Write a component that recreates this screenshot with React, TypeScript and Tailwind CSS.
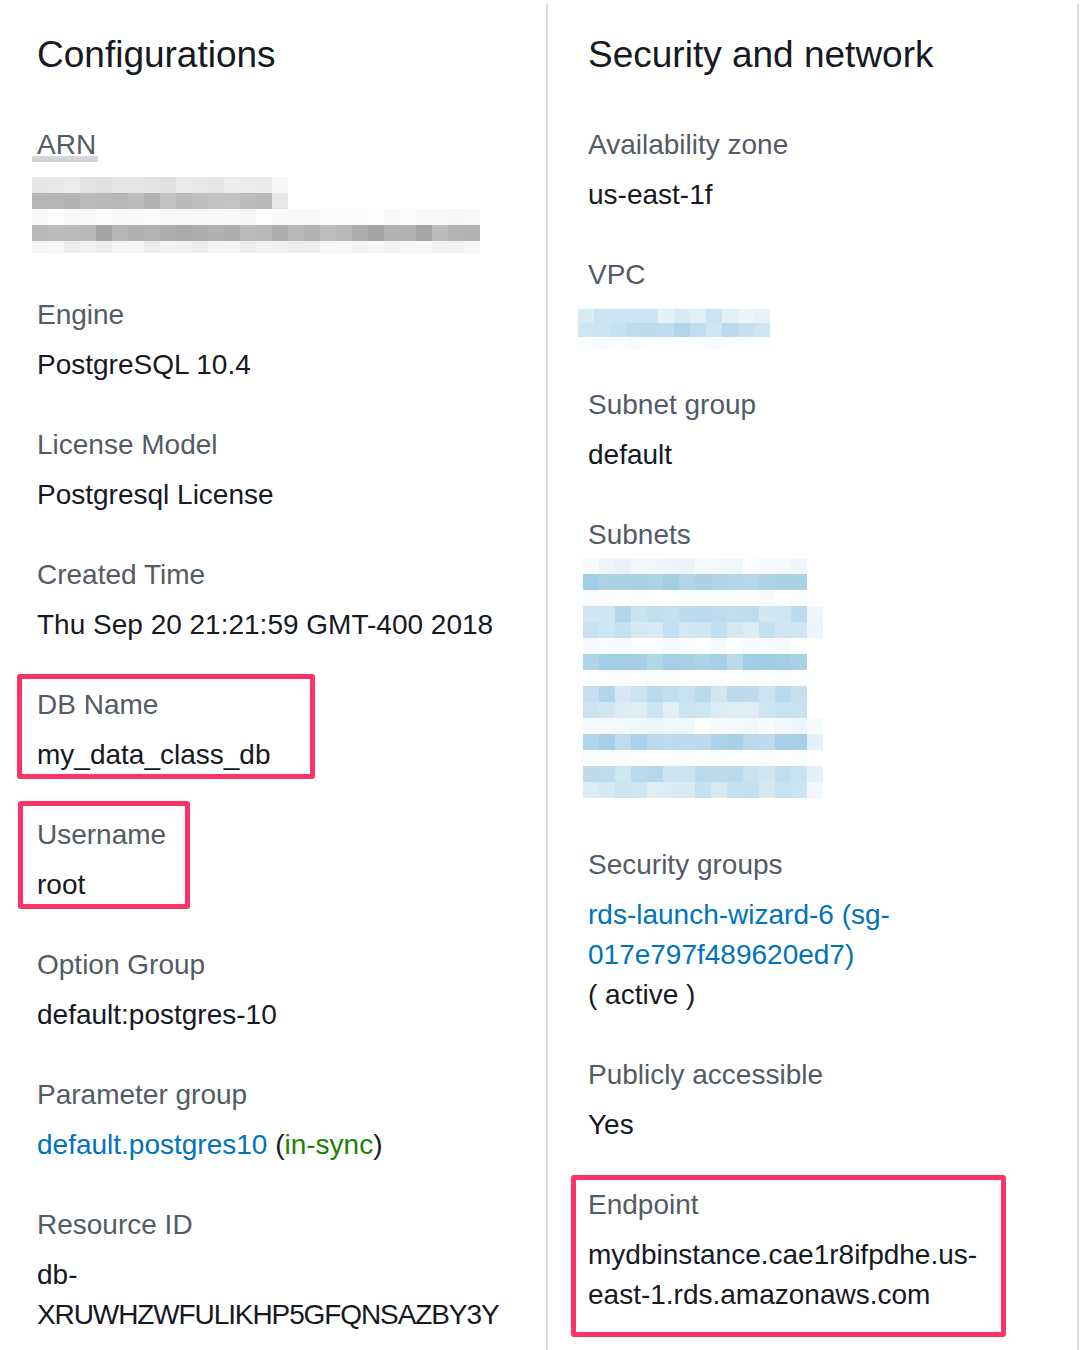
import React from "react";

const font = { fontFamily: '"Liberation Sans", Arial, sans-serif' };

function rnd(seed: number) {
  const x = Math.sin(seed * 12.9898 + 78.233) * 43758.5453;
  return x - Math.floor(x);
}

type Row = { cols: number; t: number; spread: number; h: number; fade?: boolean };

// pixelated (redacted) blocks, drawn as svg rects
function Pixels({
  rows,
  cell,
  tone,
  seed,
  width,
  height,
}: {
  rows: Row[];
  cell: number;
  tone: "gray" | "blue";
  seed: number;
  width: number;
  height: number;
}) {
  let y = 0;
  const rects: React.ReactElement[] = [];
  rows.forEach((row, ri) => {
    for (let c = 0; c < row.cols; c++) {
      let t = row.t + (rnd(seed + ri * 97 + c * 13) - 0.5) * row.spread;
      if (row.fade && c === row.cols - 1) t = t * 0.35;
      t = Math.max(0, Math.min(1, t));
      let fill: string;
      if (tone === "gray") {
        const v = Math.round(255 - t * 120);
        fill = `rgb(${v},${Math.min(255, v + 1)},${Math.min(255, v + 3)})`;
      } else {
        const r = Math.round(255 - t * (255 - 135));
        const g = Math.round(255 - t * (255 - 190));
        const b = Math.round(255 - t * (255 - 222));
        fill = `rgb(${r},${g},${b})`;
      }
      rects.push(<rect key={`${ri}-${c}`} x={c * cell} y={y} width={cell} height={row.h} fill={fill} />);
    }
    y += row.h;
  });
  return (
    <svg width={width} height={height} className="block" shapeRendering="crispEdges">
      {rects}
    </svg>
  );
}

const arnRows: Row[] = [
  { cols: 16, t: 0.22, spread: 0.14, h: 16, fade: true },
  { cols: 16, t: 0.6, spread: 0.18, h: 16, fade: true },
  { cols: 28, t: 0.05, spread: 0.06, h: 16 },
  { cols: 28, t: 0.66, spread: 0.22, h: 16 },
  { cols: 28, t: 0.12, spread: 0.1, h: 12 },
];

const vpcRows: Row[] = [
  { cols: 12, t: 0.3, spread: 0.3, h: 14 },
  { cols: 12, t: 0.55, spread: 0.35, h: 14 },
  { cols: 12, t: 0.03, spread: 0.04, h: 13 },
];

const subnetRows: Row[] = [
  { cols: 14, t: 0.12, spread: 0.2, h: 16 },
  { cols: 14, t: 0.72, spread: 0.2, h: 16 },
  { cols: 14, t: 0.03, spread: 0.05, h: 16 },
  { cols: 15, t: 0.5, spread: 0.3, h: 16, fade: true },
  { cols: 15, t: 0.38, spread: 0.25, h: 16, fade: true },
  { cols: 14, t: 0.05, spread: 0.08, h: 16 },
  { cols: 14, t: 0.68, spread: 0.22, h: 16 },
  { cols: 14, t: 0.03, spread: 0.05, h: 16 },
  { cols: 14, t: 0.5, spread: 0.3, h: 16 },
  { cols: 14, t: 0.35, spread: 0.25, h: 16 },
  { cols: 15, t: 0.08, spread: 0.12, h: 16 },
  { cols: 15, t: 0.65, spread: 0.25, h: 16, fade: true },
  { cols: 14, t: 0.03, spread: 0.05, h: 16 },
  { cols: 15, t: 0.5, spread: 0.25, h: 16, fade: true },
  { cols: 15, t: 0.38, spread: 0.22, h: 16, fade: true },
];

function Field({
  label,
  children,
  box,
}: {
  label: React.ReactNode;
  children: React.ReactNode;
  box?: string;
}) {
  return (
    <div className="relative mb-[40px]">
      {box && <span className={`pointer-events-none absolute rounded-[3px] border-[5px] border-[#fd3368] ${box}`} />}
      <div className="text-[28px] leading-[40px] text-[#545b64]">{label}</div>
      <div className="mt-[10px] text-[28px] leading-[40px] text-[#16191f]">{children}</div>
    </div>
  );
}

function Heading({ children }: { children: React.ReactNode }) {
  return <h2 className="mb-[48px] text-[37px] leading-[44px] font-normal text-[#16191f]">{children}</h2>;
}

export default function App() {
  return (
    <div className="flex h-[1350px] w-[1086px] overflow-hidden bg-white pt-[4px]" style={font}>
      <section className="w-[546px] shrink-0 pl-[37px] pr-[29px] pt-[29px]">
        <Heading>Configurations</Heading>

        <div className="mb-[40px]">
          <div className="text-[28px] leading-[40px] text-[#545b64]">
            <span className="relative inline-block">
              ARN
              <span className="absolute bottom-[3px] left-[-5px] h-[6px] w-[66px] bg-[#d3d5d8]" />
            </span>
          </div>
          <div className="ml-[-5px] mt-[12px] h-[78px]">
            <Pixels rows={arnRows} cell={16} tone="gray" seed={3} width={460} height={76} />
          </div>
        </div>

        <Field label="Engine">PostgreSQL 10.4</Field>
        <Field label="License Model">Postgresql License</Field>
        <Field label="Created Time">Thu Sep 20 21:21:59 GMT-400 2018</Field>
        <Field label="DB Name" box="left-[-20px] top-[-11px] h-[105px] w-[298px]">
          my_data_class_db
        </Field>
        <Field label="Username" box="left-[-19px] top-[-14px] h-[108px] w-[172px]">
          root
        </Field>
        <Field label="Option Group">default:postgres-10</Field>
        <Field label="Parameter group">
          <span className="text-[#0073bb]">default.postgres10</span> (
          <span className="text-[#1d8102]">in-sync</span>)
        </Field>
        <Field label="Resource ID">
          db-<span className="tracking-[-1.1px]">XRUWHZWFULIKHP5GFQNSAZBY3Y</span>
        </Field>
      </section>

      <section className="w-[533px] shrink-0 border-x-2 border-[#d5dbdb] pl-[40px] pr-[70px] pt-[29px]">
        <Heading>Security and network</Heading>

        <Field label="Availability zone">us-east-1f</Field>

        <div className="mb-[40px]">
          <div className="text-[28px] leading-[40px] text-[#545b64]">VPC</div>
          <div className="ml-[-10px] mt-[14px] h-[36px]">
            <Pixels rows={vpcRows} cell={16} tone="blue" seed={11} width={200} height={41} />
          </div>
        </div>

        <Field label="Subnet group">default</Field>

        <div className="mb-[40px]">
          <div className="text-[28px] leading-[40px] text-[#545b64]">Subnets</div>
          <div className="ml-[-5px] mt-[3px] h-[247px]">
            <Pixels rows={subnetRows} cell={16} tone="blue" seed={29} width={240} height={240} />
          </div>
        </div>

        <Field label="Security groups">
          <span className="text-[#0073bb]">rds-launch-wizard-6 (sg-017e797f489620ed7)</span>
          <div>( active )</div>
        </Field>
        <Field label="Publicly accessible">Yes</Field>
        <Field label="Endpoint" box="left-[-17px] top-[-10px] h-[162px] w-[435px]">
          mydbinstance.cae1r8ifpdhe.us-east-1.rds.amazonaws.com
        </Field>
      </section>
    </div>
  );
}
